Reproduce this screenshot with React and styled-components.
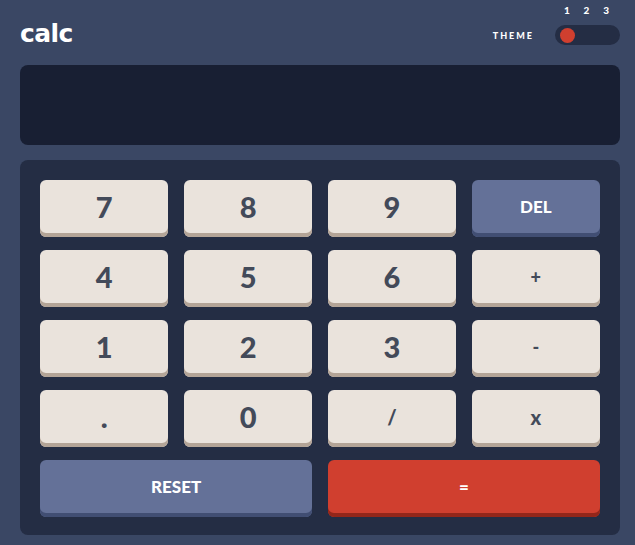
import React from "react";
import styled, { createGlobalStyle } from "styled-components";

const Global = createGlobalStyle`
  html, body { margin: 0; padding: 0; background: #3a4764; }
  body { font-family: "Lato", "Open Sans", sans-serif; }
  * { box-sizing: border-box; }
`;

const Page = styled.div`
  width: 635px;
  padding: 0 15px 10px 20px;
`;

const Header = styled.header`
  height: 45px;
  display: flex;
  justify-content: space-between;
  align-items: flex-end;
  color: #fff;
`;

const Logo = styled.h1`
  margin: 0 0 -3px 0;
  font-family: "DejaVu Sans", sans-serif;
  font-weight: 700;
  font-size: 25px;
  line-height: 28px;
  letter-spacing: -0.6px;
`;

const ThemeGroup = styled.div`
  display: flex;
  align-items: flex-end;
  gap: 21px;
`;

const ThemeLabel = styled.span`
  font-weight: 900;
  font-size: 9px;
  letter-spacing: 2px;
  height: 20px;
  line-height: 20px;
  padding-top: 1px;
`;

const SwitchCol = styled.div`
  display: flex;
  flex-direction: column;
  width: 65px;
`;

const Numbers = styled.div`
  display: flex;
  justify-content: space-between;
  padding: 0 11px 0 9px;
  font-weight: 900;
  font-size: 10px;
  line-height: 10px;
  margin-bottom: 10px;
`;

const Track = styled.div`
  position: relative;
  height: 20px;
  border-radius: 10px;
  background: #242d44;
`;

const Knob = styled.span`
  position: absolute;
  top: 2.5px;
  left: 5px;
  width: 15px;
  height: 15px;
  border-radius: 50%;
  background: #d03f2f;
`;

const Screen = styled.div`
  margin-top: 20px;
  height: 80px;
  border-radius: 8px;
  background: #181f33;
`;

const Keypad = styled.div`
  margin-top: 15px;
  height: 375px;
  border-radius: 8px;
  background: #242d44;
  padding: 20px 20px 18px;
  display: grid;
  grid-template-columns: repeat(4, 1fr);
  grid-template-rows: repeat(5, 57px);
  column-gap: 15.5px;
  row-gap: 13px;
`;

const variants = {
  num: { bg: "#eae3dc", sh: "#b3a497", fg: "#434a59" },
  fn: { bg: "#647198", sh: "#414e73", fg: "#ffffff" },
  eq: { bg: "#d03f2f", sh: "#93261a", fg: "#ffffff" },
};

const Key = styled.button`
  border: none;
  border-radius: 6px;
  padding: 0 0 4px;
  cursor: pointer;
  grid-column: span ${(p) => p.$span || 1};
  background: ${(p) => variants[p.$v].bg};
  box-shadow: inset 0 -4px 0 ${(p) => variants[p.$v].sh};
  color: ${(p) => variants[p.$v].fg};
  font-family: "Lato", sans-serif;
  font-weight: 900;
  font-size: ${(p) => p.$size}px;
  display: flex;
  align-items: center;
  justify-content: center;
`;

const keys = [
  ["7", "num", 29], ["8", "num", 29], ["9", "num", 29], ["DEL", "fn", 17],
  ["4", "num", 29], ["5", "num", 29], ["6", "num", 29], ["+", "num", 18],
  ["1", "num", 29], ["2", "num", 29], ["3", "num", 29], ["-", "num", 18],
  [".", "num", 29], ["0", "num", 29], ["/", "num", 20], ["x", "num", 20],
];

export default function App() {
  return (
    <Page>
      <Global />
      <Header>
        <Logo>calc</Logo>
        <ThemeGroup>
          <ThemeLabel>THEME</ThemeLabel>
          <SwitchCol>
            <Numbers>
              <span>1</span>
              <span>2</span>
              <span>3</span>
            </Numbers>
            <Track>
              <Knob />
            </Track>
          </SwitchCol>
        </ThemeGroup>
      </Header>
      <Screen />
      <Keypad>
        {keys.map(([k, v, s]) => (
          <Key key={k} $v={v} $size={s}>
            {k}
          </Key>
        ))}
        <Key $v="fn" $span={2} $size={17}>RESET</Key>
        <Key $v="eq" $span={2} $size={17}>=</Key>
      </Keypad>
    </Page>
  );
}
